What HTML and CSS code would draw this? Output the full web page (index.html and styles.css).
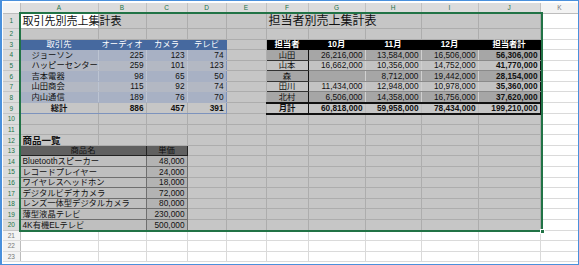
FILE: index.html
```html
<!DOCTYPE html>
<html lang="ja">
<head>
<meta charset="utf-8">
<title>Sheet</title>
<link rel="stylesheet" href="styles.css">
</head>
<body>
<div class="window">
<table class="sheet">
<colgroup>
<col class="w-rh"><col class="w-a"><col class="w-b"><col class="w-c"><col class="w-d"><col class="w-e"><col class="w-f"><col class="w-g"><col class="w-h"><col class="w-i"><col class="w-j"><col class="w-k">
</colgroup>
<thead>
<tr class="r-head">
<th class="corner"></th><th class="ch sel">A</th><th class="ch sel">B</th><th class="ch sel">C</th><th class="ch sel">D</th><th class="ch sel">E</th><th class="ch sel">F</th><th class="ch sel">G</th><th class="ch sel">H</th><th class="ch sel">I</th><th class="ch sel">J</th><th class="ch">K</th>
</tr>
</thead>
<tbody>
<tr class="r1 sr"><th class="rh sel">1</th><td class="active title t-a">取引先別売上集計表</td><td></td><td></td><td></td><td></td><td class="title t-b">担当者別売上集計表</td><td></td><td></td><td></td><td></td><td class="k"></td></tr>
<tr class="r2 sr"><th class="rh sel">2</th><td></td><td></td><td></td><td></td><td></td><td></td><td></td><td></td><td></td><td></td><td class="k"></td></tr>
<tr class="r sr"><th class="rh sel">3</th><td class="t1h c">取引先</td><td class="t1h c">オーディオ</td><td class="t1h c">カメラ</td><td class="t1h c last">テレビ</td><td></td><td class="t2h c first">担当者</td><td class="t2h c">10月</td><td class="t2h c">11月</td><td class="t2h c">12月</td><td class="t2h c last">担当者計</td><td class="k"></td></tr>
<tr class="r sr"><th class="rh sel">4</th><td class="t1b ind">ジョーソン</td><td class="t1b n">225</td><td class="t1b n">123</td><td class="t1b n last">74</td><td></td><td class="t2d c first nm">山田</td><td class="t2d n">26,216,000</td><td class="t2d n">13,584,000</td><td class="t2d n">16,506,000</td><td class="t2d n b last">56,306,000</td><td class="k"></td></tr>
<tr class="r sr"><th class="rh sel">5</th><td class="t1a ind">ハッピーセンター</td><td class="t1a n">259</td><td class="t1a n">101</td><td class="t1a n last">123</td><td></td><td class="t2l c first nm">山本</td><td class="t2l n">16,662,000</td><td class="t2l n">10,356,000</td><td class="t2l n">14,752,000</td><td class="t2l n b last">41,770,000</td><td class="k"></td></tr>
<tr class="r sr"><th class="rh sel">6</th><td class="t1b ind">吉本電器</td><td class="t1b n">98</td><td class="t1b n">65</td><td class="t1b n last">50</td><td></td><td class="t2d c first nm">森</td><td class="t2d n"></td><td class="t2d n">8,712,000</td><td class="t2d n">19,442,000</td><td class="t2d n b last">28,154,000</td><td class="k"></td></tr>
<tr class="r sr"><th class="rh sel">7</th><td class="t1a ind">山田商会</td><td class="t1a n">115</td><td class="t1a n">92</td><td class="t1a n last">74</td><td></td><td class="t2l c first nm">田川</td><td class="t2l n">11,434,000</td><td class="t2l n">12,948,000</td><td class="t2l n">10,978,000</td><td class="t2l n b last">35,360,000</td><td class="k"></td></tr>
<tr class="r sr"><th class="rh sel">8</th><td class="t1b ind">内山通信</td><td class="t1b n">189</td><td class="t1b n">76</td><td class="t1b n last">70</td><td></td><td class="t2d c first nm">北村</td><td class="t2d n">6,506,000</td><td class="t2d n">14,358,000</td><td class="t2d n">16,756,000</td><td class="t2d n b last">37,620,000</td><td class="k"></td></tr>
<tr class="r sr"><th class="rh sel">9</th><td class="t1t c b">総計</td><td class="t1t n b">886</td><td class="t1t n b">457</td><td class="t1t n b last">391</td><td></td><td class="t2t c b first nm">月計</td><td class="t2t n b">60,818,000</td><td class="t2t n b">59,958,000</td><td class="t2t n b">78,434,000</td><td class="t2t n b last">199,210,000</td><td class="k"></td></tr>
<tr class="r sr"><th class="rh sel">10</th><td></td><td></td><td></td><td></td><td></td><td></td><td></td><td></td><td></td><td></td><td class="k"></td></tr>
<tr class="r sr"><th class="rh sel">11</th><td></td><td></td><td></td><td></td><td></td><td></td><td></td><td></td><td></td><td></td><td class="k"></td></tr>
<tr class="r sr"><th class="rh sel">12</th><td class="sub">商品一覧</td><td></td><td></td><td></td><td></td><td></td><td></td><td></td><td></td><td></td><td class="k"></td></tr>
<tr class="r sr"><th class="rh sel">13</th><td class="t3h c" colspan="2">商品名</td><td class="t3h c">単価</td><td></td><td></td><td></td><td></td><td></td><td></td><td></td><td class="k"></td></tr>
<tr class="r sr"><th class="rh sel">14</th><td class="t3a" colspan="2">Bluetoothスピーカー</td><td class="t3b n">48,000</td><td></td><td></td><td></td><td></td><td></td><td></td><td></td><td class="k"></td></tr>
<tr class="r sr"><th class="rh sel">15</th><td class="t3a" colspan="2">レコードプレイヤー</td><td class="t3b n">24,000</td><td></td><td></td><td></td><td></td><td></td><td></td><td></td><td class="k"></td></tr>
<tr class="r sr"><th class="rh sel">16</th><td class="t3a" colspan="2">ワイヤレスヘッドホン</td><td class="t3b n">18,000</td><td></td><td></td><td></td><td></td><td></td><td></td><td></td><td class="k"></td></tr>
<tr class="r sr"><th class="rh sel">17</th><td class="t3a" colspan="2">デジタルビデオカメラ</td><td class="t3b n">72,000</td><td></td><td></td><td></td><td></td><td></td><td></td><td></td><td class="k"></td></tr>
<tr class="r sr"><th class="rh sel">18</th><td class="t3a" colspan="2">レンズ一体型デジタルカメラ</td><td class="t3b n">80,000</td><td></td><td></td><td></td><td></td><td></td><td></td><td></td><td class="k"></td></tr>
<tr class="r sr"><th class="rh sel">19</th><td class="t3a" colspan="2">薄型液晶テレビ</td><td class="t3b n">230,000</td><td></td><td></td><td></td><td></td><td></td><td></td><td></td><td class="k"></td></tr>
<tr class="r sr"><th class="rh sel">20</th><td class="t3a" colspan="2">4K有機ELテレビ</td><td class="t3b n">500,000</td><td></td><td></td><td></td><td></td><td></td><td></td><td></td><td class="k"></td></tr>
<tr class="r"><th class="rh">21</th><td></td><td></td><td></td><td></td><td></td><td></td><td></td><td></td><td></td><td></td><td class="k"></td></tr>
<tr class="r"><th class="rh">22</th><td></td><td></td><td></td><td></td><td></td><td></td><td></td><td></td><td></td><td></td><td class="k"></td></tr>
<tr class="r"><th class="rh">23</th><td></td><td></td><td></td><td></td><td></td><td></td><td></td><td></td><td></td><td></td><td class="k"></td></tr>
</tbody>
</table>
<div class="selection"><span class="handle"></span></div>
</div>
</body>
</html>
```
FILE: styles.css
```css
* { box-sizing: border-box; }
body { margin: 0; background: #fff; font-family: "Liberation Sans", "Noto Sans CJK JP", sans-serif; }

.window {
  position: relative;
  width: 579px;
  height: 265px;
  border: 1px solid #4a90dc;
  border-left-width: 2px;
  padding: 2px 0 0 1px;
  overflow: hidden;
  background: #fff;
}

.sheet { border-collapse: collapse; table-layout: fixed; width: 576px; }
.w-rh { width: 17px; }
.w-a { width: 78px; }
.w-b { width: 48px; }
.w-c { width: 41px; }
.w-d { width: 39px; }
.w-e { width: 40px; }
.w-f { width: 42px; }
.w-g { width: 57px; }
.w-h { width: 56px; }
.w-i { width: 57px; }
.w-j { width: 62px; }
.w-k { width: 39px; }

.r-head { height: 10px; }
.r1 { height: 15px; }
.r2 { height: 11px; }
.r { height: 10.6px; }

.corner { background: #f3f3f3; border-right: 1px solid #bdbdbd; border-bottom: 1px solid #bdbdbd; padding: 0; }
.ch {
  padding: 0; font-weight: normal; font-size: 6.5px; line-height: 9px;
  background: #f3f3f3; color: #777; text-align: center;
  border-right: 1px solid #d4d4d4; border-bottom: 1px solid #bdbdbd;
}
.ch.sel { background: #dcdcdc; color: #217346; border-right-color: #c2c2c2; }
.rh {
  padding: 0; font-weight: normal; font-size: 6.5px; line-height: 9px;
  background: #f3f3f3; color: #777; text-align: center;
  border-right: 1px solid #bdbdbd; border-bottom: 1px solid #dcdcdc;
}
.rh.sel { background: #dcdcdc; color: #217346; border-bottom-color: #c6c6c6; }

td {
  padding: 0 2px; font-size: 8.3px; line-height: 9px; vertical-align: bottom;
  white-space: nowrap; overflow: visible; color: #111;
  background: #fff; border-right: 1px solid #dadada; border-bottom: 1px solid #dadada;
}
.sr td { background: #c6c6c6; border-color: #adadad; }
.sr td.k { background: #fff; border-color: #dadada; }
.sr td.active { background: #fff; }

.title { line-height: 14px; padding-left: 2px; }
.t-a { font-size: 11px; }
.t-b { font-size: 12px; }
.sub { font-size: 9.5px; font-weight: bold; }
.c { text-align: center; }
.n { text-align: right; }
.b { font-weight: bold; }
.ind { padding-left: 11px; }

/* table 1 */
.sr td.t1h { background: #46699f; color: #fff; border-color: #46699f; }
.sr td.t1b { background: #a8b1c4; border-right-color: #bcc4d2; border-bottom-color: #a8b1c4; }
.sr td.t1a { background: #b3b8c3; border-right-color: #bcc4d2; border-bottom-color: #b3b8c3; }
.sr td.t1t { border-top: 1px solid #7d93bd; border-bottom: 1px solid #7d93bd; border-right-color: #adadad; }
.sr td.last.t1b, .sr td.last.t1a, .sr td.last.t1t { border-right-color: #7d93bd; }

/* table 2 */
.sr td.t2h { background: #000; color: #fff; border-color: #000; font-weight: bold; }
.sr td.t2d { background: #a6a6a6; border-right-color: #d0d0d0; border-bottom-color: #8a8a8a; }
.sr td.t2l { background: #c3c3c3; border-right-color: #d0d0d0; border-bottom-color: #8a8a8a; }
.sr td.nm { border-right: 1px solid #111; border-bottom-color: #333; }
.sr td.t2t { border-top: 2px solid #111; border-bottom: 2px solid #111; border-right-color: #bdbdbd; }
.sr td.t2t.nm { border-right-color: #111; border-bottom: 2px solid #111; }
.sr td.first { border-left: 1px solid #111; }
.sr td.last.t2d, .sr td.last.t2l, .sr td.last.t2t { border-right: 1px solid #111; }

/* table 3 */
.sr td.t3h { background: #606060; color: #111; border: 1px solid #222; }
.sr td.t3a { background: #bfbfbf; border: 1px solid #6f6f6f; }
.sr td.t3b { background: #b3b3b3; border: 1px solid #6f6f6f; }

.selection {
  position: absolute;
  left: 17px; top: 11px;
  width: 524px; height: 220px;
  border: 2px solid #217346;
  pointer-events: none;
}
.handle {
  position: absolute; right: -4px; bottom: -4px;
  width: 5px; height: 5px; background: #217346; border: 1px solid #fff;
}
```
